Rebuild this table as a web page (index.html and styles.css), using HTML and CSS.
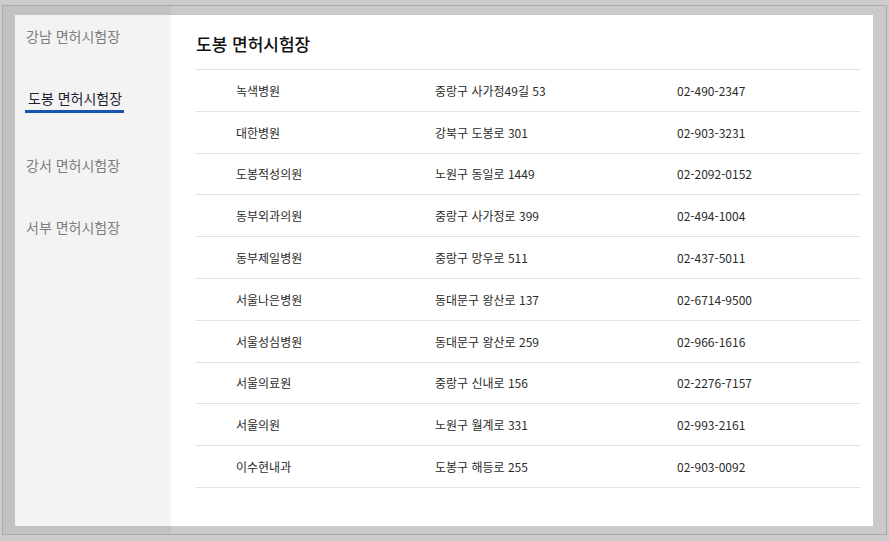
FILE: index.html
```html
<!DOCTYPE html>
<html lang="ko">
<head>
<meta charset="utf-8">
<title>도봉 면허시험장</title>
<link rel="stylesheet" href="styles.css">
</head>
<body>
<div class="frame">
  <div class="layout">
    <nav class="sidebar">
      <a class="side-item">강남 면허시험장</a>
      <a class="side-item active"><span class="side-label">도봉 면허시험장</span></a>
      <a class="side-item">강서 면허시험장</a>
      <a class="side-item">서부 면허시험장</a>
    </nav>
    <main class="content">
      <h1 class="title">도봉 면허시험장</h1>
      <div class="table">
        <div class="row"><span>녹색병원</span><span>중랑구 사가정49길 53</span><span>02-490-2347</span></div>
        <div class="row"><span>대한병원</span><span>강북구 도봉로 301</span><span>02-903-3231</span></div>
        <div class="row"><span>도봉적성의원</span><span>노원구 동일로 1449</span><span>02-2092-0152</span></div>
        <div class="row"><span>동부외과의원</span><span>중랑구 사가정로 399</span><span>02-494-1004</span></div>
        <div class="row"><span>동부제일병원</span><span>중랑구 망우로 511</span><span>02-437-5011</span></div>
        <div class="row"><span>서울나은병원</span><span>동대문구 왕산로 137</span><span>02-6714-9500</span></div>
        <div class="row"><span>서울성심병원</span><span>동대문구 왕산로 259</span><span>02-966-1616</span></div>
        <div class="row"><span>서울의료원</span><span>중랑구 신내로 156</span><span>02-2276-7157</span></div>
        <div class="row"><span>서울의원</span><span>노원구 월계로 331</span><span>02-993-2161</span></div>
        <div class="row"><span>이수현내과</span><span>도봉구 해등로 255</span><span>02-903-0092</span></div>
      </div>
    </main>
  </div>
</div>
</body>
</html>
```

FILE: styles.css
```css
html, body {
  margin: 0;
  padding: 0;
  background: #cccccc;
  font-family: "Noto Sans CJK KR", "Noto Sans", sans-serif;
}

.frame {
  margin: 5px 2px 5px 2px;
  height: 530px;
  box-sizing: border-box;
  border: 1px solid #aaaaaa;
  background: linear-gradient(to right, #c2c2c2 168px, #cacaca 168px);
  padding: 9px 13px 8px 12px;
  display: flex;
}

.layout {
  flex: 1;
  display: flex;
}

.sidebar {
  width: 156px;
  flex: none;
  background: #f3f3f3;
  padding: 11px 0 0 11px;
  box-sizing: border-box;
  display: flex;
  flex-direction: column;
}

.side-item {
  display: block;
  height: 62px;
  font-size: 14px;
  line-height: 20px;
  color: #7d7d7d;
  white-space: nowrap;
  cursor: pointer;
}

.side-item.active {
  height: 67px;
  color: #1e2230;
}

.side-label {
  display: inline-block;
  margin-left: -1px;
  padding: 0 2px 2px 3px;
  border-bottom: 3px solid #1a55ad;
}

.content {
  flex: 1;
  background: #ffffff;
  padding: 17px 12px 0 24px;
}

.title {
  margin: 0 0 13px 1px;
  font-size: 17px;
  line-height: 24px;
  font-weight: 500;
  color: #111111;
}

.table {
  border-top: 1px solid #e2e2e2;
}

.row {
  display: grid;
  grid-template-columns: 200px 242px 1fr;
  height: 41.8px;
  box-sizing: border-box;
  border-bottom: 1px solid #e2e2e2;
  align-items: center;
  font-size: 12px;
  color: #2b2b2b;
}

.row span {
  padding-left: 41px;
  white-space: nowrap;
}
.row span:nth-child(2),
.row span:nth-child(3) {
  padding-left: 40px;
}
```
